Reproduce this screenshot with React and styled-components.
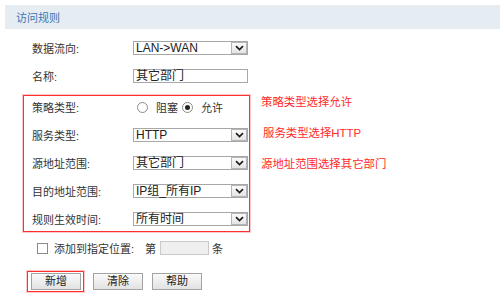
import React from "react";
import styled, { createGlobalStyle } from "styled-components";

const Global = createGlobalStyle`
  html, body { margin: 0; padding: 0; background: #ffffff; }
  body { font-family: "Liberation Sans", "Noto Sans CJK SC", sans-serif; }
  * { box-sizing: border-box; }
`;

const Page = styled.div`
  width: 500px;
  height: 295px;
  overflow: hidden;
  padding-top: 5px;
  background: #fff;
  font-family: "Liberation Sans", "Noto Sans CJK SC", sans-serif;
  font-size: 11px;
  color: #333;
`;

const Header = styled.div`
  margin-left: 5px;
  height: 24px;
  background: #e6edf2;
  padding-left: 11px;
  display: flex;
  align-items: center;
`;

const HeaderTitle = styled.span`
  font-size: 11px;
  color: #3a74ae;
`;

const Form = styled.div`
  padding-left: 23px;
`;

const FieldGrid = styled.div`
  display: grid;
  grid-template-columns: 101px 115px;
  grid-auto-rows: 16px;
  row-gap: 12px;
  align-items: center;
  margin-top: ${(p) => p.$top || 0}px;
  padding-left: ${(p) => p.$indent || 0}px;
`;

const Label = styled.span`
  font-size: 11px;
  color: #333;
  white-space: nowrap;
`;

const SelectBox = styled.div`
  display: flex;
  align-items: center;
  height: 14px;
  border: 1px solid #a7a7a7;
  background: #fff;
`;

const SelectValue = styled.span`
  flex: 1;
  padding-left: 2px;
  font-size: 12px;
  line-height: 14px;
  color: #222;
  white-space: nowrap;
`;

const ArrowBox = styled.span`
  width: 16px;
  height: 12px;
  border: 1px solid #b5b5b5;
  background: linear-gradient(#fbfbfb, #e4e4e4);
  display: flex;
  align-items: center;
  justify-content: center;
`;

const TextInput = styled.div`
  height: 14px;
  border: 1px solid ${(p) => (p.$disabled ? "#c9c9c9" : "#a7a7a7")};
  background: ${(p) => (p.$disabled ? "#efefef" : "#fff")};
  width: ${(p) => p.$width || 115}px;
  padding-left: 2px;
  font-size: 12px;
  line-height: 13px;
  color: #222;
  white-space: nowrap;
`;

const Section = styled.div`
  display: flex;
  align-items: flex-start;
  margin-top: 11px;
`;

const HighlightBox = styled.div`
  width: 227px;
  border: 1px solid #ff3030;
  box-shadow: 0 0 0 1px rgba(255, 70, 70, 0.3);
  padding: 3px 1px 4px 8px;
`;

const NoteList = styled.div`
  display: flex;
  flex-direction: column;
  gap: 17px;
  margin-left: 11px;
`;

const Note = styled.span`
  font-size: 11.4px;
  line-height: 14px;
  color: #ff2a2a;
  white-space: nowrap;
  padding-left: ${(p) => p.$shift || 0}px;
`;

const RadioGroup = styled.div`
  display: flex;
  align-items: center;
  padding-left: 4px;
`;

const Radio = styled.span`
  width: 11px;
  height: 11px;
  border-radius: 50%;
  border: 1px solid #8a8a8a;
  background: #fff;
  display: inline-flex;
  align-items: center;
  justify-content: center;
  &::after {
    content: "";
    width: 5px;
    height: 5px;
    border-radius: 50%;
    background: ${(p) => (p.$checked ? "#222" : "transparent")};
  }
`;

const OptionText = styled.span`
  font-size: 11px;
  margin-left: 8px;
  margin-right: 4px;
  color: #333;
`;

const CheckRow = styled.div`
  display: flex;
  align-items: center;
  height: 16px;
  margin-top: 8px;
  margin-left: 14px;
`;

const CheckBox = styled.span`
  width: 11px;
  height: 11px;
  border: 1px solid #8a8a8a;
  background: #fff;
`;

const Inline = styled.span`
  font-size: 11px;
  color: #333;
  margin-left: ${(p) => p.$gap || 0}px;
  margin-right: ${(p) => p.$after || 0}px;
  white-space: nowrap;
`;

const ButtonRow = styled.div`
  display: flex;
  align-items: center;
  gap: 9px;
  margin-top: 15px;
  margin-left: 4px;
`;

const FocusRing = styled.div`
  border: 1px solid #ff3030;
  box-shadow: 0 0 0 1px rgba(255, 70, 70, 0.3);
  padding: 1px 2px 1px 3px;
  display: flex;
`;

const Button = styled.button`
  width: 50px;
  height: 17px;
  padding: 0;
  border: 1px solid #a3a3a3;
  background: linear-gradient(#fafafa, #e2e2e2);
  font-family: "Liberation Sans", "Noto Sans CJK SC", sans-serif;
  font-size: 11px;
  line-height: 15px;
  color: #222;
`;

const Chevron = () => (
  <svg width="9" height="6" viewBox="0 0 9 6">
    <path d="M1 1.2 L4.5 4.6 L8 1.2" fill="none" stroke="#1e1e1e" strokeWidth="1.7" />
  </svg>
);

const Select = ({ value }) => (
  <SelectBox>
    <SelectValue>{value}</SelectValue>
    <ArrowBox>
      <Chevron />
    </ArrowBox>
  </SelectBox>
);

export default function App() {
  return (
    <>
      <Global />
      <Page>
        <Header>
          <HeaderTitle>访问规则</HeaderTitle>
        </Header>
        <Form>
          <FieldGrid $top={11} $indent={9}>
            <Label>数据流向:</Label>
            <Select value="LAN->WAN" />
            <Label>名称:</Label>
            <TextInput>其它部门</TextInput>
          </FieldGrid>
          <Section>
            <HighlightBox>
              <FieldGrid>
                <Label>策略类型:</Label>
                <RadioGroup>
                  <Radio />
                  <OptionText>阻塞</OptionText>
                  <Radio $checked />
                  <OptionText>允许</OptionText>
                </RadioGroup>
                <Label>服务类型:</Label>
                <Select value="HTTP" />
                <Label>源地址范围:</Label>
                <Select value="其它部门" />
                <Label>目的地址范围:</Label>
                <Select value="IP组_所有IP" />
                <Label>规则生效时间:</Label>
                <Select value="所有时间" />
              </FieldGrid>
            </HighlightBox>
            <NoteList>
              <Note>策略类型选择允许</Note>
              <Note $shift={2}>服务类型选择HTTP</Note>
              <Note>源地址范围选择其它部门</Note>
            </NoteList>
          </Section>
          <CheckRow>
            <CheckBox />
            <Inline $gap={6}>添加到指定位置:</Inline>
            <Inline $gap={11} $after={4}>第</Inline>
            <TextInput $disabled $width={49} />
            <Inline $gap={3}>条</Inline>
          </CheckRow>
          <ButtonRow>
            <FocusRing>
              <Button>新增</Button>
            </FocusRing>
            <Button>清除</Button>
            <Button>帮助</Button>
          </ButtonRow>
        </Form>
      </Page>
    </>
  );
}
